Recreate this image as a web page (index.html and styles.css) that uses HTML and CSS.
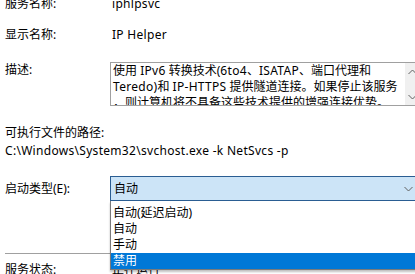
FILE: index.html
```html
<!DOCTYPE html>
<html lang="zh-CN">
<head>
<meta charset="utf-8">
<link rel="stylesheet" href="styles.css">
</head>
<body>
<div class="panel">
  <div class="row row-first">
    <div class="label">服务名称:</div>
    <div class="value latin">iphlpsvc</div>
  </div>
  <div class="row row-display">
    <div class="label">显示名称:</div>
    <div class="value latin">IP Helper</div>
  </div>
  <div class="row row-desc">
    <div class="label">描述:</div>
    <div class="desc-box">
      <div class="desc-text">
        <div class="line">使用 <span class="latin">IPv6</span> 转换技术(<span class="latin">6to4</span>、<span class="latin">ISATAP</span>、端口代理和</div>
        <div class="line"><span class="latin">Teredo)</span>和 <span class="latin">IP-HTTPS</span> 提供隧道连接。如果停止该服务</div>
        <div class="line">，则计算机将不具备这些技术提供的增强连接优势。</div>
      </div>
      <div class="scrollbar">
        <svg class="arrow" width="9" height="6" viewBox="0 0 9 6"><path d="M0.5 5 L4.5 1 L8.5 5" fill="none" stroke="#606060" stroke-width="1"/></svg>
        <svg class="arrow" width="9" height="6" viewBox="0 0 9 6"><path d="M0.5 1 L4.5 5 L8.5 1" fill="none" stroke="#606060" stroke-width="1"/></svg>
      </div>
    </div>
  </div>
  <div class="path-label">可执行文件的路径:</div>
  <div class="path-value latin">C:\Windows\System32\svchost.exe -k NetSvcs -p</div>
  <div class="row row-start">
    <div class="label">启动类型(E):</div>
    <div class="combo-wrap">
      <div class="combo">
        <span>自动</span>
        <svg class="combo-arrow" width="9" height="6" viewBox="0 0 9 6"><path d="M0.5 1 L4.5 5 L8.5 1" fill="none" stroke="#606060" stroke-width="1"/></svg>
      </div>
      <ul class="dropdown">
        <li>自动(延迟启动)</li>
        <li>自动</li>
        <li>手动</li>
        <li class="selected">禁用</li>
      </ul>
    </div>
  </div>
  <div class="separator"></div>
  <div class="row row-status">
    <div class="label">服务状态:</div>
    <div class="value">正在运行</div>
  </div>
</div>
</body>
</html>
```

FILE: styles.css
```css
html, body {
  margin: 0;
  padding: 0;
  background: #ffffff;
  overflow: hidden;
}
body {
  width: 415px;
  height: 274px;
  font-family: "Noto Sans", "Noto Sans CJK SC", sans-serif;
  font-size: 12px;
  color: #000000;
}
.latin {
  letter-spacing: 0.3px;
}
.panel {
  padding-left: 5px;
}
.row {
  display: flex;
  align-items: flex-start;
  line-height: 16px;
}
.label {
  width: 105px;
  flex: none;
  white-space: nowrap;
}
.value {
  padding-left: 2px;
  white-space: nowrap;
}
.row-first {
  margin-top: -4px;
}
.row-display {
  margin-top: 15px;
}
.row-desc {
  margin-top: 19px;
}
.desc-box {
  flex: none;
  width: 311px;
  height: 42px;
  border: 1px solid #a0a0a0;
  display: flex;
  overflow: hidden;
}
.desc-text {
  flex: 1;
  padding-left: 2px;
  overflow: hidden;
}
.line {
  white-space: nowrap;
  line-height: 16px;
  height: 16px;
}
.scrollbar {
  flex: none;
  width: 17px;
  background: #f0f0f0;
  display: flex;
  flex-direction: column;
  justify-content: space-between;
  align-items: center;
  padding: 6px 0 5px;
  box-sizing: border-box;
}
.arrow {
  display: block;
  margin-right: 3px;
}
.path-label {
  margin-top: 19px;
  line-height: 16px;
}
.path-value {
  margin-top: 2px;
  line-height: 16px;
  white-space: nowrap;
}
.row-start {
  margin-top: 17px;
  align-items: center;
}
.combo-wrap {
  position: relative;
  flex: none;
  width: 313px;
}
.combo {
  height: 23px;
  border: 1px solid #2a5d92;
  background: #cce4f7;
  display: flex;
  align-items: center;
  justify-content: space-between;
  padding-left: 3px;
  padding-right: 9px;
}
.combo-arrow {
  display: block;
}
.dropdown {
  position: absolute;
  top: 25px;
  left: 0;
  width: 311px;
  margin: 0;
  padding: 4px 0 0;
  list-style: none;
  background: #ffffff;
  border-left: 1px solid #7a7a7a;
  border-right: 1px solid #7a7a7a;
  border-bottom: 1px solid #7a7a7a;
  box-shadow: 0 2px 2px rgba(0, 0, 0, 0.25);
  z-index: 2;
}
.dropdown li {
  height: 16px;
  line-height: 16px;
  padding-left: 2px;
  white-space: nowrap;
}
.dropdown li.selected {
  background: #0078d7;
  color: #ffffff;
}
.separator {
  margin-top: 52px;
  height: 1px;
  width: 405px;
  background: #a0a0a0;
}
.row-status {
  margin-top: 8px;
}
```
